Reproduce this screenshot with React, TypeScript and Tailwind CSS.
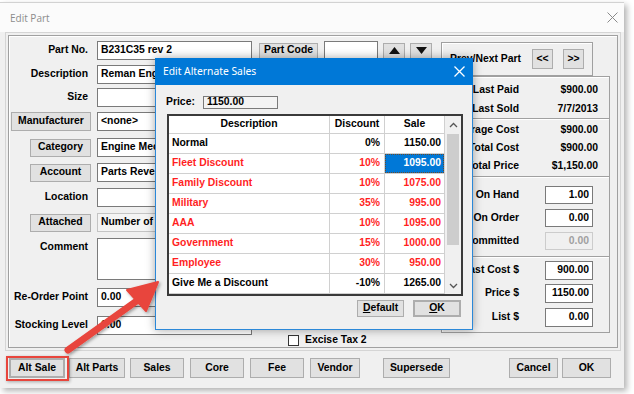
import React from 'react';

type P = { children?: React.ReactNode; className?: string };

const Btn = ({ children, className = '' }: P) => (
  <div className={`flex items-center justify-center bg-[#e1e1e1] border border-[#adadad] whitespace-nowrap ${className}`}>
    {children}
  </div>
);

const Field = ({ children, className = '' }: P) => (
  <div className={`flex items-center border px-[3px] overflow-hidden whitespace-nowrap ${className}`}>
    {children}
  </div>
);

const Label = ({ children, className = '' }: P) => (
  <div className={`w-[82px] shrink-0 flex justify-end whitespace-nowrap ${className}`}>{children}</div>
);

const Tri = ({ up }: { up?: boolean }) => (
  <svg width="11" height="7" viewBox="0 0 11 7">
    <polygon points={up ? '0,7 5.5,0 11,7' : '0,0 5.5,7 11,0'} fill="#111" />
  </svg>
);

const Chevron = ({ up }: { up?: boolean }) => (
  <svg width="9" height="6" viewBox="0 0 9 6">
    <polyline
      points={up ? '1,5 4.5,1.5 8,5' : '1,1 4.5,4.5 8,1'}
      fill="none"
      stroke="#555"
      strokeWidth="1.3"
    />
  </svg>
);

const Sep = () => <div className="h-[2px] border-t border-t-[#a0a0a0] border-b border-b-white" />;

const InfoRow = ({ label, value, className = '' }: { label: string; value: string; className?: string }) => (
  <div className={`flex items-center h-[18px] ${className}`}>
    <div className="w-[77px] text-right whitespace-nowrap">{label}</div>
    <div className="w-[79px] text-right">{value}</div>
  </div>
);

const InputRow = ({ label, value, className = '', disabled = false, tall = false }: {
  label: string; value: string; className?: string; disabled?: boolean; tall?: boolean;
}) => (
  <div className={`flex items-center ${tall ? 'h-[19px]' : 'h-[18px]'} ${className}`}>
    <div className="w-[77px] text-right whitespace-nowrap">{label}</div>
    <Field
      className={`ml-[26px] w-[48px] h-full justify-end ${
        disabled ? 'bg-[#f0f0f0] border-[#cccccc] text-[#a0a0a0]' : 'bg-white border-[#7a7a7a]'
      }`}
    >
      {value}
    </Field>
  </div>
);

const sales = [
  { d: 'Normal', p: '0%', s: '1150.00', red: false },
  { d: 'Fleet Discount', p: '10%', s: '1095.00', red: true, sel: true },
  { d: 'Family Discount', p: '10%', s: '1075.00', red: true },
  { d: 'Military', p: '35%', s: '995.00', red: true },
  { d: 'AAA', p: '10%', s: '1095.00', red: true },
  { d: 'Government', p: '15%', s: '1000.00', red: true },
  { d: 'Employee', p: '30%', s: '950.00', red: true },
  { d: 'Give Me a Discount', p: '-10%', s: '1265.00', red: false },
];

const white = 'bg-white border-[#7a7a7a]';

export default function App() {
  return (
    <div className="relative w-[634px] h-[394px] bg-white overflow-hidden text-[10.4px] font-bold text-black leading-none font-['Liberation_Sans',Arial,sans-serif]">
      {/* Edit Part window */}
      <div className="w-[624px] h-[386px] mt-[2px] border-t border-[#d2d2d2] bg-[#f0f0f0] flex flex-col shadow-[3px_3px_6px_rgba(0,0,0,0.3)]">
        <div className="h-[29px] bg-[#fbfbfb] flex items-center justify-between pl-[10px] pr-[6px]">
          <span className="text-[10px] font-normal text-[#8c8c8c] font-['Open_Sans',sans-serif]">Edit Part</span>
          <svg width="11" height="11" viewBox="0 0 11 11">
            <path d="M0.5 0.5L10.5 10.5M10.5 0.5L0.5 10.5" stroke="#8a8a8a" strokeWidth="1" />
          </svg>
        </div>

        <div className="ml-[5px] w-[616px] h-[319px] border border-[#d5d5d5] p-[2px]">
          <div className="h-full border border-[#a0a0a0] shadow-[inset_1px_1px_0_#fff] flex">
            {/* left column */}
            <div className="w-[432px] shrink-0 flex flex-col">
              <div className="flex items-center h-[19px] mt-[5px]">
                <Label className="pr-[3px]">Part No.</Label>
                <Field className={`ml-[6px] w-[155px] h-full ${white}`}>B231C35 rev 2</Field>
                <Btn className="ml-[7px] w-[59px] h-[16px]">Part Code</Btn>
                <Field className={`ml-[6px] w-[54px] h-full ${white}`} />
                <Btn className="ml-[5px] w-[22px] h-[16px]"><Tri up /></Btn>
                <Btn className="ml-[5px] w-[22px] h-[16px]"><Tri /></Btn>
              </div>
              <div className="flex items-center h-[19px] mt-[5px]">
                <Label className="pr-[3px]">Description</Label>
                <Field className={`ml-[6px] w-[320px] h-full ${white}`}>Reman Eng</Field>
              </div>
              <div className="flex items-center h-[19px] mt-[4px]">
                <Label className="pr-[3px]">Size</Label>
                <Field className={`ml-[6px] w-[155px] h-full ${white}`} />
              </div>
              <div className="flex items-center h-[19px] mt-[5px]">
                <Label><Btn className="w-[80px] h-[19px]">Manufacturer</Btn></Label>
                <Field className={`ml-[6px] w-[155px] h-full ${white}`}>&lt;none&gt;</Field>
              </div>
              <div className="flex items-center h-[19px] mt-[7px]">
                <Label><Btn className="w-[61px] h-[18px]">Category</Btn></Label>
                <Field className={`ml-[6px] w-[155px] h-full ${white}`}>Engine Mec</Field>
              </div>
              <div className="flex items-center h-[19px] mt-[6px]">
                <Label><Btn className="w-[61px] h-[18px]">Account</Btn></Label>
                <Field className={`ml-[6px] w-[155px] h-full ${white}`}>Parts Reve</Field>
              </div>
              <div className="flex items-center h-[19px] mt-[6px]">
                <Label className="pr-[3px]">Location</Label>
                <Field className={`ml-[6px] w-[155px] h-full ${white}`} />
              </div>
              <div className="flex items-center h-[19px] mt-[6px]">
                <Label><Btn className="w-[61px] h-[18px]">Attached</Btn></Label>
                <Field className="ml-[6px] w-[155px] h-full bg-[#f4f4f4] border-[#c4c4c4]">Number of</Field>
              </div>
              <div className="flex items-start h-[42px] mt-[6px]">
                <Label className="pr-[3px] pt-[4px]">Comment</Label>
                <Field className={`ml-[6px] w-[155px] h-full ${white}`} />
              </div>
              <div className="flex items-center h-[19px] mt-[8px]">
                <Label className="pr-[3px]">Re-Order Point</Label>
                <Field className={`ml-[6px] w-[155px] h-full ${white}`}>0.00</Field>
              </div>
              <div className="flex items-center h-[19px] mt-[9px]">
                <Label className="pr-[3px]">Stocking Level</Label>
                <Field className={`ml-[6px] w-[155px] h-full ${white}`}>0.00</Field>
              </div>
              <div className="flex items-center h-[11px] ml-[279px]">
                <div className="w-[11px] h-[11px] bg-white border border-[#333]" />
                <span className="ml-[6px] whitespace-nowrap">Excise Tax 2</span>
              </div>
            </div>

            {/* right column */}
            <div className="w-[169px] shrink-0 pt-[6px] flex flex-col">
              <div className="w-[152px] h-[34px] border border-[#a0a0a0] shadow-[inset_1px_1px_0_#fff] flex items-center pl-[8px]">
                <span className="whitespace-nowrap">Prev/Next Part</span>
                <Btn className="ml-auto w-[21px] h-[20px]">&lt;&lt;</Btn>
                <Btn className="ml-[10px] mr-[8px] w-[21px] h-[20px]">&gt;&gt;</Btn>
              </div>
              <div className="h-[257px] border border-[#a0a0a0] shadow-[inset_1px_1px_0_#fff] flex flex-col">
                <InfoRow label="Last Paid" value="$900.00" className="mt-[4px]" />
                <InfoRow label="Last Sold" value="7/7/2013" className="mt-[1px]" />
                <Sep />
                <InfoRow label="Average Cost" value="$900.00" className="mt-[1px]" />
                <InfoRow label="Total Cost" value="$900.00" />
                <InfoRow label="Total Price" value="$1,150.00" />
                <div className="mt-[1px]"><Sep /></div>
                <InputRow label="On Hand" value="1.00" className="mt-[8px]" />
                <InputRow label="On Order" value="0.00" className="mt-[5px]" />
                <InputRow label="Committed" value="0.00" className="mt-[5px]" disabled />
                <div className="mt-[6px]"><Sep /></div>
                <InputRow label="Last Cost $" value="900.00" className="mt-[3px]" tall />
                <InputRow label="Price $" value="1150.00" className="mt-[4px]" tall />
                <InputRow label="List $" value="0.00" className="mt-[5px]" tall />
              </div>
            </div>
          </div>
        </div>

        {/* bottom buttons */}
        <div className="flex items-center h-[20px] mt-[7px]">
          <Btn className="ml-[9px] w-[56px] h-[20px] border-2 border-[#0078d7]">Alt Sale</Btn>
          <Btn className="ml-[4px] w-[56px] h-[20px]">Alt Parts</Btn>
          <Btn className="ml-[5px] w-[54px] h-[20px]">Sales</Btn>
          <Btn className="ml-[6px] w-[54px] h-[20px]">Core</Btn>
          <Btn className="ml-[6px] w-[54px] h-[20px]">Fee</Btn>
          <Btn className="ml-[6px] w-[50px] h-[20px]">Vendor</Btn>
          <Btn className="ml-[23px] w-[67px] h-[20px]">Supersede</Btn>
          <Btn className="ml-[59px] w-[49px] h-[20px]">Cancel</Btn>
          <Btn className="ml-[4px] w-[49px] h-[20px]">OK</Btn>
        </div>
      </div>

      {/* Edit Alternate Sales dialog */}
      <div className="absolute left-[155px] top-[58px] w-[318px] h-[272px] bg-[#f0f0f0] border border-[#2b88d8] shadow-[0_0_9px_rgba(0,0,0,0.35)] flex flex-col">
        <div className="h-[27px] -mx-[1px] -mt-[1px] bg-[#0078d7] flex items-center justify-between pl-[8px] pr-[8px]">
          <span className="text-white font-normal text-[10.3px] font-['Noto_Sans',sans-serif]">Edit Alternate Sales</span>
          <svg width="11" height="11" viewBox="0 0 11 11">
            <path d="M0.5 0.5L10.5 10.5M10.5 0.5L0.5 10.5" stroke="#fff" strokeWidth="1.3" />
          </svg>
        </div>
        <div className="pl-[10px] flex flex-col">
          <div className="flex items-center h-[13px] mt-[11px]">
            <span className="w-[37px]">Price:</span>
            <div className="w-[75px] h-full border border-[#7a7a7a] bg-[#f3f3f3] flex items-center px-[3px]">1150.00</div>
          </div>
          <div className="ml-[1px] mt-[5px] w-[296px] h-[182px] border-2 border-[#3a3a3a] bg-white flex">
            <div className="w-[276px] flex flex-col">
              <div className="flex h-[18px] border-b border-[#d0d0d0]">
                <div className="w-[161px] border-r border-[#d0d0d0] flex items-center justify-center">Description</div>
                <div className="w-[55px] border-r border-[#d0d0d0] flex items-center justify-center">Discount</div>
                <div className="w-[60px] border-r border-[#d0d0d0] flex items-center justify-center">Sale</div>
              </div>
              {sales.map((r) => (
                <div key={r.d} className={`flex h-[20px] border-b border-[#d0d0d0] ${r.red ? 'text-[#ff1f1f]' : 'text-black'}`}>
                  <div className="w-[161px] border-r border-[#d0d0d0] flex items-center pl-[3px]">{r.d}</div>
                  <div className="w-[55px] border-r border-[#d0d0d0] flex items-center justify-end pr-[4px]">{r.p}</div>
                  <div className="w-[60px] border-r border-[#d0d0d0] flex">
                    {r.sel ? (
                      <div className="flex-1 bg-[#0078d7] text-white border border-dotted border-[#6b4a2a] flex items-center justify-end pr-[2px]">
                        {r.s}
                      </div>
                    ) : (
                      <div className="flex-1 flex items-center justify-end pr-[3px]">{r.s}</div>
                    )}
                  </div>
                </div>
              ))}
            </div>
            <div className="w-[16px] bg-[#f0f0f0] flex flex-col">
              <div className="h-[18px] flex items-center justify-center"><Chevron up /></div>
              <div className="h-[111px] mx-[2px] bg-[#cdcdcd]" />
              <div className="flex-1" />
              <div className="h-[17px] flex items-center justify-center"><Chevron /></div>
            </div>
          </div>
          <div className="flex justify-end pr-[11px] mt-[4px]">
            <Btn className="w-[47px] h-[17px]"><span><span className="underline">D</span>efault</span></Btn>
            <Btn className="ml-[9px] w-[48px] h-[17px] border-2 border-[#0078d7]"><span><span className="underline">O</span>K</span></Btn>
          </div>
        </div>
      </div>

      {/* callout highlight */}
      <div className="absolute left-[6px] top-[356px] w-[63px] h-[25px] border-[2.5px] border-[#e8453c] shadow-[1px_1px_3px_rgba(0,0,0,0.3)]" />
      <svg className="absolute left-0 top-0 pointer-events-none" width="634" height="394">
        <defs>
          <filter id="arrowShadow" x="-20%" y="-20%" width="140%" height="140%">
            <feDropShadow dx="1.5" dy="1.5" stdDeviation="1.5" floodColor="#000" floodOpacity="0.35" />
          </filter>
        </defs>
        <g filter="url(#arrowShadow)" fill="#e8453c" stroke="#e8453c" strokeLinejoin="round">
          <line x1="68" y1="350" x2="138" y2="300" strokeWidth="7" strokeLinecap="round" />
          <polygon points="158,282 127,290 146,311" strokeWidth="2" />
        </g>
      </svg>
    </div>
  );
}
